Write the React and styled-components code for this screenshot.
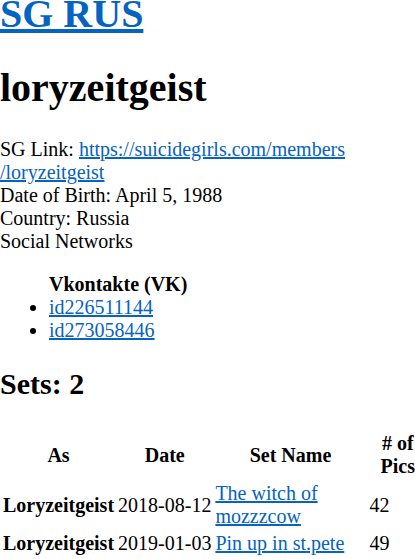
import React from 'react';
import styled, { createGlobalStyle } from 'styled-components';

const GlobalStyle = createGlobalStyle`
  html, body {
    overflow: hidden;
  }
  body {
    margin: 0;
    font-family: "Liberation Serif", "Times New Roman", serif;
    font-size: 20px;
    color: #000;
    background: #fff;
  }
`;

const Link = styled.a`
  color: #0563c1;
  text-decoration: underline;
`;

const SiteTitle = styled.h1`
  font-size: 40px;
  font-weight: bold;
  margin: -10px 0 27px;
`;

const Name = styled.h1`
  font-size: 40px;
  font-weight: bold;
  margin: 27px 0;
`;

const Info = styled.div`
  line-height: normal;
`;

const Networks = styled.ul`
  margin: 20px 0;
  padding-left: 49px;
`;

const Network = styled.li`
  list-style: none;
  font-weight: bold;
`;

const SetsTitle = styled.h2`
  font-size: 30px;
  font-weight: bold;
  margin: 25px 0 28px;
`;

const Table = styled.table`
  width: 429px;
  border-spacing: 2px;
`;

const Head = styled.th`
  padding: 1px;
  text-align: center;
  vertical-align: middle;
`;

const Cell = styled.td`
  padding: 1px;
  text-align: left;
  font-weight: ${props => (props.bold ? 'bold' : 'normal')};
  white-space: ${props => (props.nowrap ? 'nowrap' : 'normal')};
  vertical-align: middle;
`;

const sets = [
  { id: 1, as: 'Loryzeitgeist', date: '2018-08-12', name: 'The witch of mozzzcow', pics: 42 },
  { id: 2, as: 'Loryzeitgeist', date: '2019-01-03', name: 'Pin up in st.pete', pics: 49 },
];

const App = () => {
  return (
    <>
      <GlobalStyle />
      <SiteTitle>
        <Link href="#">SG RUS</Link>
      </SiteTitle>
      <Name>loryzeitgeist</Name>
      <Info>
        SG Link:{' '}
        <Link href="#">
          https://suicidegirls.com/members<wbr />/loryzeitgeist
        </Link>
        <br />
        Date of Birth: April 5, 1988
        <br />
        Country: Russia
        <br />
        Social Networks
      </Info>
      <Networks>
        <Network>Vkontakte (VK)</Network>
        <li>
          <Link href="#">id226511144</Link>
        </li>
        <li>
          <Link href="#">id273058446</Link>
        </li>
      </Networks>
      <SetsTitle>Sets: {sets.length}</SetsTitle>
      <Table>
        <thead>
          <tr>
            <Head>As</Head>
            <Head>Date</Head>
            <Head>Set Name</Head>
            <Head># of Pics</Head>
          </tr>
        </thead>
        <tbody>
          {sets.map(set => (
            <tr key={set.id}>
              <Cell bold nowrap>{set.as}</Cell>
              <Cell nowrap>{set.date}</Cell>
              <Cell>
                <Link href="#">{set.name}</Link>
              </Cell>
              <Cell>{set.pics}</Cell>
            </tr>
          ))}
        </tbody>
      </Table>
    </>
  );
};

export default App;
